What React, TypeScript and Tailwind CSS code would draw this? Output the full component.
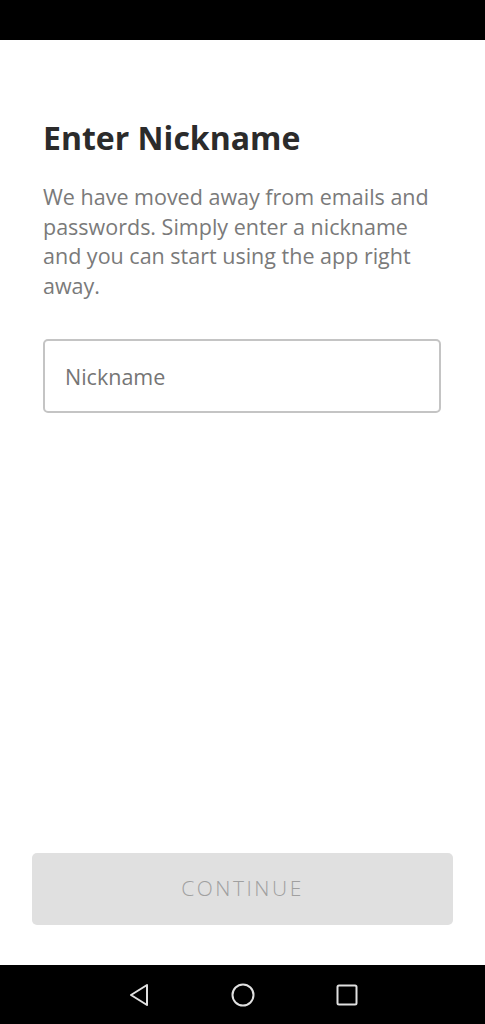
export default function App() {
  return (
    <div
      className="flex h-[1024px] w-full flex-col bg-white"
      style={{ fontFamily: '"Open Sans", "Noto Sans", sans-serif' }}
    >
      {/* status bar */}
      <div className="h-[40px] w-full shrink-0 bg-black" />

      <div className="flex flex-1 flex-col px-[43px] pt-[78px]">
        <h1 className="text-[32px] font-bold leading-[40px] text-[#2b2b2b]">Enter Nickname</h1>
        <p className="mt-[24px] text-[21.5px] leading-[29.5px] text-[#7a7a7a]">
          We have moved away from emails and passwords. Simply enter a nickname and you can start using the app right away.
        </p>
        <input
          type="text"
          placeholder="Nickname"
          className="mt-[39px] h-[74px] w-[398px] rounded-[5px] border-2 border-[#c4c4c4] px-[20px] text-[21.5px] text-[#333] outline-none placeholder:text-[#757575]"
        />
      </div>

      <div className="shrink-0 px-[32px] pb-[40px]">
        <button className="flex h-[72px] w-full items-center justify-center rounded-[5px] bg-[#e0e0e0] text-[21px] font-light tracking-[0.12em] text-[#a0a0a0]">
          CONTINUE
        </button>
      </div>

      {/* navigation bar */}
      <div className="flex h-[59px] w-full shrink-0 items-center justify-center bg-black">
        <div className="flex items-center gap-[81px]">
          <svg width="22" height="24" viewBox="0 0 22 24" fill="none">
            <path d="M19 2 L3 12 L19 22 Z" stroke="#e0e0e0" strokeWidth="2" strokeLinejoin="round" />
          </svg>
          <svg width="24" height="24" viewBox="0 0 24 24" fill="none">
            <circle cx="12" cy="12" r="10.5" stroke="#e0e0e0" strokeWidth="2" />
          </svg>
          <svg width="22" height="22" viewBox="0 0 22 22" fill="none">
            <rect x="1.5" y="1.5" width="19" height="19" rx="1.5" stroke="#e0e0e0" strokeWidth="2" />
          </svg>
        </div>
      </div>
    </div>
  );
}
